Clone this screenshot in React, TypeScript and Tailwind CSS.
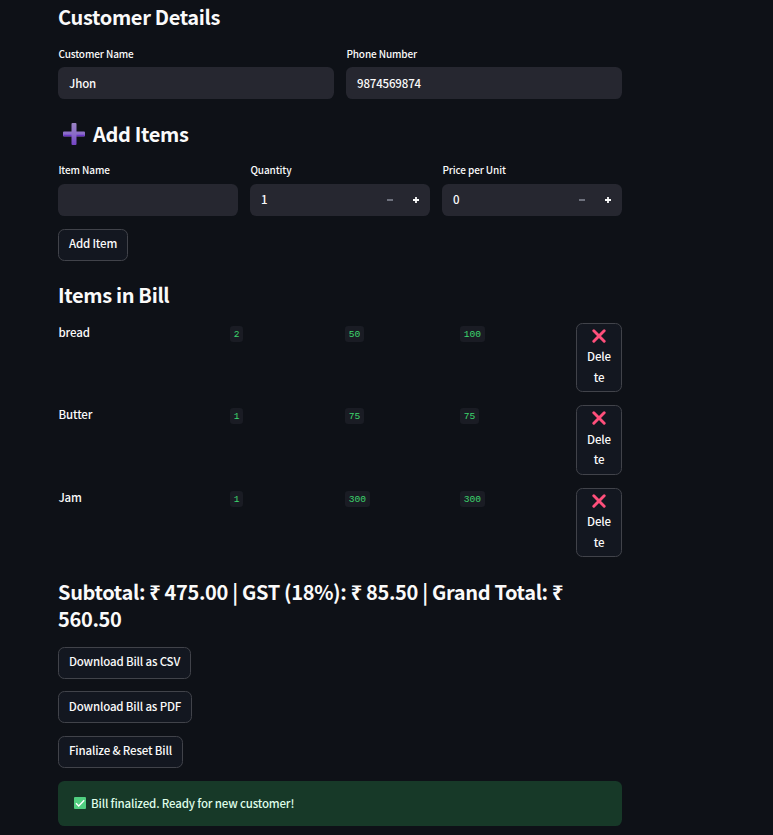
import type { ReactNode } from "react";

type BillItem = { name: string; quantity: number; price: number; total: number };

const items: BillItem[] = [
  { name: "bread", quantity: 2, price: 50, total: 100 },
  { name: "Butter", quantity: 1, price: 75, total: 75 },
  { name: "Jam", quantity: 1, price: 300, total: 300 },
];

function Heading({ children }: { children: ReactNode }) {
  return (
    <h3 className="flex h-[27px] items-center whitespace-nowrap text-[20px] leading-[27px] font-bold tracking-[-0.34px]">
      {children}
    </h3>
  );
}

function Field({ label, value, stepper = false }: { label: string; value: string; stepper?: boolean }) {
  return (
    <div className="min-w-0 flex-1">
      <div className="h-[19.4px] pl-[0.4px] text-[10px] leading-[12px] tracking-[-0.11px] whitespace-nowrap">{label}</div>
      <div className="flex h-8 items-center rounded-[6.4px] bg-[#262730] pl-[11px] text-[11.5px] tracking-[-0.16px]">
        <span className="flex-1">{value}</span>
        {stepper && (
          <div className="flex">
            <span className="flex w-[26px] justify-center text-[#7d7f8c]">
              <svg width="8" height="8" viewBox="0 0 8 8"><path d="M1 4h6" stroke="currentColor" strokeWidth="1.7" /></svg>
            </span>
            <span className="mr-[1px] flex w-[26px] justify-center">
              <svg width="8" height="8" viewBox="0 0 8 8"><path d="M1 4h6M4 1v6" stroke="currentColor" strokeWidth="1.8" /></svg>
            </span>
          </div>
        )}
      </div>
    </div>
  );
}

function Button({ children, className }: { children: ReactNode; className: string }) {
  return (
    <button className={`flex h-8 items-center justify-center rounded-[6.4px] border border-[#41434a] bg-[#131720] pb-[2px] text-[11.5px] font-medium tracking-[-0.17px] whitespace-nowrap ${className}`}>
      {children}
    </button>
  );
}

function Code({ value }: { value: number }) {
  return (
    <div className="flex items-start pt-[3px]">
      <code className="flex h-4 items-center rounded-[3.2px] bg-[#1a1c24] px-[3.8px] pt-[2px] font-['Liberation_Mono',monospace] text-[9.6px] leading-4 text-[#3dd56d]">
        {value}
      </code>
    </div>
  );
}

function PlusIcon() {
  return (
    <svg className="mt-[2px] mr-2 ml-[5px]" width="22" height="22" viewBox="0 0 22 22">
      <defs>
        <linearGradient id="plus" x1="0" y1="0" x2="0" y2="1">
          <stop offset="0" stopColor="#9a83c4" />
          <stop offset="0.5" stopColor="#8a6cc8" />
          <stop offset="1" stopColor="#7444c6" />
        </linearGradient>
      </defs>
      <path d="M9.5 0h3q1 0 1 1v7.500h7.500q1 0 1 1v3q0 1-1 1h-7.500V21q0 1-1 1h-3q-1 0-1-1v-7.500H1q-1 0-1-1v-3q0-1 1-1h7.500V1q0-1 1-1z" fill="url(#plus)" />
      <path d="M.5 12.500h8M13.500 12.500h8" stroke="#6a35c4" strokeWidth="1.500" />
    </svg>
  );
}

export default function App() {
  return (
    <main className="h-[835px] overflow-hidden bg-[#0e1117] pl-[58px] font-['Noto_Sans_CJK_SC','Noto_Sans',sans-serif] font-medium text-[#fafafa]">
      <div className="w-[564px] pt-[3px]">
        <Heading>Customer Details</Heading>
        <div className="mt-[17.9px] flex gap-3">
          <Field label="Customer Name" value="Jhon" />
          <Field label="Phone Number" value="9874569874" />
        </div>
        <div className="mt-[20.7px]">
          <Heading><PlusIcon />Add Items</Heading>
        </div>
        <div className="mt-[17.4px] flex gap-3">
          <Field label="Item Name" value="" />
          <Field label="Quantity" value="1" stepper />
          <Field label="Price per Unit" value="0" stepper />
        </div>
        <Button className="mt-[13px] w-[70px]">Add Item</Button>
        <div className="mt-[20.2px]">
          <Heading>Items in Bill</Heading>
        </div>
        <div className="mt-[14.7px] flex flex-col gap-[12.7px]">
          {items.map((item) => (
            <div key={item.name} className="grid h-[69.8px] grid-cols-[172px_115px_115px_116px_46px]">
              <div className="pl-[0.4px] text-[11.5px] leading-[19px] tracking-[-0.12px]">{item.name}</div>
              <Code value={item.quantity} />
              <Code value={item.price} />
              <Code value={item.total} />
              <button className="flex flex-col items-center justify-start rounded-[6.4px] border border-[#41434a] bg-[#131720] pt-[2.8px] text-[11.5px] leading-[20.4px] tracking-[-0.12px]">
                <span className="flex h-[20px] items-center pr-px pb-px">
                  <svg width="14" height="14" viewBox="0 0 14 14"><path d="M1.800 1.800l10.400 10.400M12.200 1.800l-10.400 10.400" stroke="#ff4f7b" strokeWidth="2.900" strokeLinecap="round" /></svg>
                </span>
                <span>Dele</span>
                <span>te</span>
              </button>
            </div>
          ))}
        </div>
        <h3 className="mt-[20.6px] text-[20px] leading-[27px] font-bold tracking-[-0.34px]">
          Subtotal: ₹ 475.00 | GST (18%): ₹ 85.50 | Grand Total: ₹<br />560.50
        </h3>
        <div className="mt-[14.7px] flex flex-col gap-[12.7px]">
          <Button className="w-[133px]">Download Bill as CSV</Button>
          <Button className="w-[134px]">Download Bill as PDF</Button>
          <Button className="w-[125px]">Finalize &amp; Reset Bill</Button>
          <div className="flex h-[45px] items-center rounded-[6.4px] bg-[#173928] pt-px pl-4 text-[11.500px] tracking-[-0.17px] text-[#dffde9]">
            <svg className="mr-[5px] mb-px" width="12" height="12" viewBox="0 0 12 12">
              <rect width="12" height="12" rx="1" fill="#50cf80" />
              <path d="M2 6.200l2.700 2.700L10.200 3.200" fill="none" stroke="#fff" strokeWidth="1.400" />
            </svg>
            Bill finalized. Ready for new customer!
          </div>
        </div>
      </div>
    </main>
  );
}
